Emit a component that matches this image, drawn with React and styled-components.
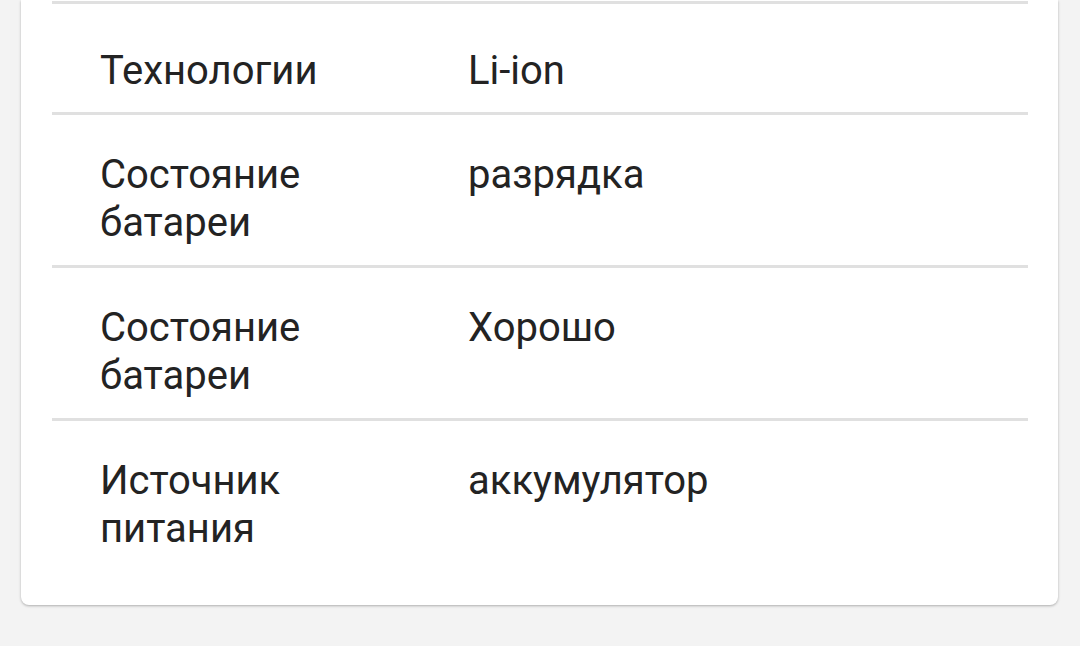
import React from 'react';
import styled, { createGlobalStyle } from 'styled-components';

const GlobalStyle = createGlobalStyle`
    html, body {
        margin: 0;
        padding: 0;
        background: #f3f3f3;
    }
    body {
        font-family: Roboto, "Noto Sans", sans-serif;
        color: #232323;
    }
`;

const Page = styled.div`
    width: 1080px;
    height: 646px;
    overflow: hidden;
    padding: 0 22px 0 21px;
    box-sizing: border-box;
`;

const Card = styled.div`
    background: #fff;
    border-radius: 0 0 8px 8px;
    box-shadow: 0 1px 3px rgba(0, 0, 0, 0.22), 0 1px 2px rgba(0, 0, 0, 0.08);
    padding: 1px 30px 0 31px;
`;

const Divider = styled.div`
    height: 3px;
    background: #e0e0e0;
`;

const Row = styled.div`
    display: grid;
    grid-template-columns: 368px 1fr;
    padding: ${(props) => props.top}px 48px ${(props) => props.bottom}px;
    border-bottom: ${(props) => (props.last ? 'none' : '3px solid #e0e0e0')};
    font-size: 40px;
    line-height: 48px;
`;

const Label = styled.div`
    padding-right: 40px;
`;

const Value = styled.div``;

const rows = [
    { label: 'Технологии', value: 'Li-ion', top: 43, bottom: 17 },
    { label: 'Состояние батареи', value: 'разрядка', top: 36, bottom: 18 },
    { label: 'Состояние батареи', value: 'Хорошо', top: 36, bottom: 18 },
    { label: 'Источник питания', value: 'аккумулятор', top: 36, bottom: 52 },
];

function App() {
    return (
        <Page>
            <GlobalStyle />
            <Card>
                <Divider />
                {rows.map((r, i) => (
                    <Row key={i} top={r.top} bottom={r.bottom} last={i === rows.length - 1}>
                        <Label>{r.label}</Label>
                        <Value>{r.value}</Value>
                    </Row>
                ))}
            </Card>
        </Page>
    );
}

export default App;
